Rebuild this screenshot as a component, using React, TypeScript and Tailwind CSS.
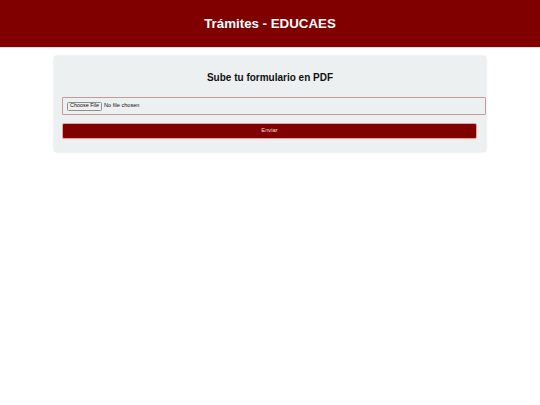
export default function App() {
  return (
    <div className="min-h-[405px] bg-white font-['Liberation_Sans',Arial,sans-serif]">
      {/* Header */}
      <header className="h-[48px] bg-[#800000] border-b border-[#f3d6d6] flex items-center justify-center">
        <h1 className="text-white font-bold text-[13.3px] leading-none">Trámites - EDUCAES</h1>
      </header>

      {/* Upload card */}
      <main className="pt-[8px]">
        <form className="mx-auto w-[432px] bg-[#ecf0f0] rounded-[3px] shadow-[0_0_2px_rgba(0,0,0,0.18)] px-[8px] pt-[16px] pb-[13px]">
          <h2 className="text-center text-[#111] font-bold text-[10px] leading-[12px]">
            Sube tu formulario en PDF
          </h2>

          <label className="mt-[13px] w-[424px] h-[18px] border border-[#c49a9a] rounded-[1px] flex items-center pl-[4px] gap-[2px] cursor-pointer">
            <span className="h-[9px] w-[35px] bg-[#efefef] border border-[#8f8f8f] rounded-[1.5px] flex items-center justify-center text-[5.4px] text-[#111] leading-none">
              Choose File
            </span>
            <span className="text-[5.6px] text-[#111] leading-none">No file chosen</span>
            <input type="file" accept="application/pdf" className="hidden" />
          </label>

          <button
            type="submit"
            className="mt-[8px] w-[415px] h-[16px] bg-[#800000] border border-[#e8a0a0] rounded-[2px] text-[#f3d9d9] text-[5.8px] leading-none flex items-center justify-center"
          >
            Enviar
          </button>
        </form>
      </main>
    </div>
  );
}
